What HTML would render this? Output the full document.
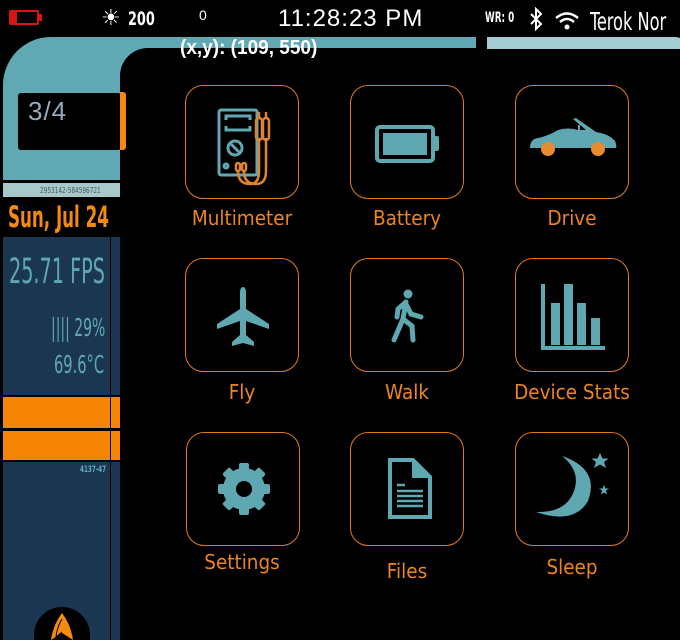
<!DOCTYPE html>
<html style="height:640px;overflow:hidden"><head><meta charset="utf-8"><style>
*{margin:0;padding:0;box-sizing:border-box}
body{width:680px;height:640px;background:#000;position:relative;overflow:hidden;font-family:"Liberation Sans",sans-serif}
.a{position:absolute}
.cond{font-family:"DejaVu Sans Condensed","Liberation Sans",sans-serif;transform-origin:0 0;white-space:nowrap}
.box{position:absolute;width:114px;height:114px;border:1.5px solid #e07a1a;border-radius:18px}
.lbl{position:absolute;width:170px;text-align:center;color:#ec8420;font-size:20px;font-family:"DejaVu Sans","Liberation Sans",sans-serif;transform:scaleX(.92)}
.box svg{position:absolute;left:0;top:0}
</style></head><body>
<!-- status bar -->
<div class="a" style="left:9px;top:10px;width:30px;height:15px;border:2px solid #d81414;border-radius:2px"></div>
<div class="a" style="left:11px;top:12px;width:6px;height:11px;background:#d81414"></div>
<div class="a" style="left:39px;top:14px;width:3px;height:7px;background:#d81414"></div>
<div class="a" style="left:101px;top:5px;color:#fff;font-size:22px">☀</div>
<div class="a cond" style="left:128px;top:8px;color:#fff;font-size:19px;font-weight:bold;transform:scaleX(.75)">200</div>
<div class="a" style="left:199px;top:7px;color:#fff;font-size:14px">0</div>
<div class="a" style="left:278px;top:5px;color:#fff;font-size:24px;letter-spacing:1px">11:28:23 PM</div>
<div class="a cond" style="left:485px;top:10px;color:#fff;font-size:14px;font-weight:bold;transform:scaleX(.7)">WR: 0</div>
<svg class="a" style="left:528px;top:7px" width="56" height="26" viewBox="0 0 56 26"><path d="M3 7 L13 17 L8 22 L8 2 L13 7 L3 17" fill="none" stroke="#fff" stroke-width="2"/><path d="M28 11 Q39 2 50 11" fill="none" stroke="#fff" stroke-width="2.5"/><path d="M32 15 Q39 9 46 15" fill="none" stroke="#fff" stroke-width="2.5"/><circle cx="39" cy="20" r="2.5" fill="#fff"/></svg>
<div class="a cond" style="left:590px;top:7px;color:#fff;font-size:25px;transform:scaleX(.72)">Terok Nor</div>
<!-- frame -->
<div class="a" style="left:3px;top:37px;width:473px;height:143px;background:#60a9b4;border-top-left-radius:48px"></div>
<div class="a" style="left:120px;top:48px;width:400px;height:140px;background:#000;border-top-left-radius:28px"></div>
<div class="a" style="left:487px;top:37px;width:200px;height:12px;background:#a3cdd0;border-top-right-radius:30px"></div>
<div class="a" style="left:18px;top:93px;width:103px;height:57px;background:#000;border-radius:3px"></div>
<div class="a" style="left:120px;top:92px;width:6px;height:58px;background:#f48a10;border-radius:0 3px 3px 0"></div>
<div class="a" style="left:28px;top:96px;font-size:26px;letter-spacing:1px;color:#9ab">3/4</div>
<div class="a" style="left:180px;top:37px;color:#fff;font-size:20px;font-weight:bold;transform:scaleX(.95);transform-origin:0 0">(x,y): (109, 550)</div>
<div class="a" style="left:3px;top:183px;width:117px;height:14px;background:#a8c9c9"></div>
<div class="a cond" style="left:40px;top:186px;color:#456;font-size:8px;transform:scaleX(.8)">2953142-584596721</div>
<div class="a cond" style="left:8px;top:200px;color:#f48a10;font-size:29px;font-weight:bold;transform:scaleX(.64)">Sun, Jul 24</div>
<!-- left panel -->
<div class="a" style="left:3px;top:237px;width:107px;height:158px;background:#1b3651"></div>
<div class="a" style="left:111px;top:237px;width:9px;height:158px;background:#1b3651"></div>
<div class="a" style="left:3px;top:397px;width:107px;height:31px;background:#f68506"></div>
<div class="a" style="left:111px;top:397px;width:9px;height:31px;background:#f68506"></div>
<div class="a" style="left:3px;top:431px;width:107px;height:29px;background:#f68506"></div>
<div class="a" style="left:111px;top:431px;width:9px;height:29px;background:#f68506"></div>
<div class="a" style="left:3px;top:462px;width:107px;height:178px;background:#1b3651"></div>
<div class="a" style="left:111px;top:462px;width:9px;height:178px;background:#1b3651"></div>
<div class="a cond" style="left:9px;top:252px;color:#5fa8b0;font-size:35px;transform:scaleX(.61)">25.71 FPS</div>
<div class="a cond" style="left:51px;top:313px;color:#5fa8b0;font-size:25px;transform:scaleX(.62)">|||| 29%</div>
<div class="a cond" style="left:54px;top:350px;color:#5fa8b0;font-size:25px;transform:scaleX(.65)">69.6°C</div>
<div class="a cond" style="left:80px;top:465px;color:#5fb0c0;font-size:9px;font-weight:bold;transform:scaleX(.7)">4137-47</div>
<div class="a" style="left:34px;top:607px;width:56px;height:56px;border-radius:50%;background:#000"></div>
<svg class="a" style="left:48px;top:613px" width="28" height="27"><path d="M14 0 Q5 12 3 27 L14 20 L25 27 Q23 12 14 0Z" fill="#f48a10"/><path d="M14 6 Q9 14 8 24 L14 19" fill="none" stroke="#000" stroke-width="1"/></svg>
<!-- grid -->
<div class="box" style="left:185px;top:85px"><svg width="114" height="114" viewBox="0 0 114 114"><g fill="none" stroke="#5fa8b2" stroke-width="3"><rect x="33" y="24" width="38" height="65" rx="2"/><path d="M40 34 v-4 h24 v4 M40 40 v4 h24 v-4"/><circle cx="49" cy="62" r="7"/><path d="M45 58 L53 66"/><circle cx="40" cy="80" r="2"/></g><g fill="none" stroke="#e08430" stroke-width="2.5"><rect x="50" y="77" width="4" height="8" rx="2"/><rect x="56" y="77" width="4" height="8" rx="2"/><path d="M52 85 Q52 98 64 98 Q73 98 73 85 V52 M58 85 Q58 98 70 98 Q80 98 80 85 V52"/><rect x="70" y="32" width="6" height="22" rx="3"/><rect x="77" y="32" width="6" height="22" rx="3"/><path d="M73 32 v-6 M80 32 v-6"/></g></svg></div>
<div class="box" style="left:350px;top:85px"><svg width="114" height="114" viewBox="0 0 114 114"><rect x="26" y="41" width="56" height="34" rx="3" fill="none" stroke="#5fa8b2" stroke-width="4"/><rect x="32" y="47" width="44" height="22" fill="#5fa8b2"/><rect x="83" y="50" width="5" height="15" rx="2" fill="#5fa8b2"/></svg></div>
<div class="box" style="left:515px;top:85px"><svg width="114" height="114" viewBox="0 0 114 114"><path d="M14 62 Q14 53 22 52 Q32 50 42 44 Q52 41 62 44 L62 39 L64 39 L64 44 L70 44 L57 33 L60 32 L80 46 Q93 48 99 55 Q101 60 100 62 Z" fill="#5fa8b2"/><circle cx="32" cy="63" r="7" fill="#e88a30"/><circle cx="82" cy="63" r="7" fill="#e88a30"/></svg></div>
<div class="lbl" style="left:157px;top:206px">Multimeter</div>
<div class="lbl" style="left:322px;top:206px">Battery</div>
<div class="lbl" style="left:487px;top:206px">Drive</div>

<div class="box" style="left:185px;top:258px"><svg width="114" height="114" viewBox="0 0 114 114"><path d="M57 28 Q60 28 60 34 V50 L83 65 V70 L60 62 V76 L68 83 V87 L57 84 L46 87 V83 L54 76 V62 L31 70 V65 L54 50 V34 Q54 28 57 28Z" fill="#5fa8b2"/></svg></div>
<div class="box" style="left:350px;top:258px"><svg width="114" height="114" viewBox="0 0 114 114"><circle cx="57" cy="35" r="4.5" fill="#5fa8b2"/><g fill="none" stroke="#5fa8b2" stroke-width="5" stroke-linecap="round"><path d="M55 43 L52 60 L61 67 L62 81"/><path d="M52 60 L43 81"/><path d="M55 43 L47 50 L46 58"/><path d="M56 47 L60 55 L70 58"/></g></svg></div>
<div class="box" style="left:515px;top:258px"><svg width="114" height="114" viewBox="0 0 114 114"><path d="M27 25 V89 H89" fill="none" stroke="#5fa8b2" stroke-width="4"/><rect x="35" y="44" width="9" height="42" fill="#5fa8b2"/><rect x="48" y="25" width="9" height="61" fill="#5fa8b2"/><rect x="61" y="44" width="9" height="42" fill="#5fa8b2"/><rect x="75" y="59" width="9" height="27" fill="#5fa8b2"/></svg></div>
<div class="lbl" style="left:157px;top:380px">Fly</div>
<div class="lbl" style="left:322px;top:380px">Walk</div>
<div class="lbl" style="left:487px;top:380px">Device Stats</div>

<div class="box" style="left:186px;top:432px"><svg width="114" height="114" viewBox="0 0 114 114"><g transform="translate(57 56)"><circle r="21" fill="#5fa8b2"/><g fill="#5fa8b2"><rect x="-5" y="-26" width="10" height="10" rx="2"/><rect x="-5" y="-26" width="10" height="10" rx="2" transform="rotate(45)"/><rect x="-5" y="-26" width="10" height="10" rx="2" transform="rotate(90)"/><rect x="-5" y="-26" width="10" height="10" rx="2" transform="rotate(135)"/><rect x="-5" y="-26" width="10" height="10" rx="2" transform="rotate(180)"/><rect x="-5" y="-26" width="10" height="10" rx="2" transform="rotate(225)"/><rect x="-5" y="-26" width="10" height="10" rx="2" transform="rotate(270)"/><rect x="-5" y="-26" width="10" height="10" rx="2" transform="rotate(315)"/></g><circle r="8" fill="#000"/></g></svg></div>
<div class="box" style="left:350px;top:432px"><svg width="114" height="114" viewBox="0 0 114 114"><path d="M39 27 H62 L79 44 V84 H39Z" fill="none" stroke="#5fa8b2" stroke-width="4"/><path d="M61 28 V45 H78Z" fill="#5fa8b2"/><g stroke="#5fa8b2" stroke-width="2.5"><path d="M46 52 H54 M46 58 H72 M46 63 H72 M46 68 H72 M46 73 H72"/></g></svg></div>
<div class="box" style="left:515px;top:432px"><svg width="114" height="114" viewBox="0 0 114 114"><path d="M46 23 Q84 36 72 68 Q58 92 20 79 Q50 80 58 58 Q65 38 46 23Z" fill="#5fa8b2"/><path d="M84 20 l2.5 5.5 6 0 -4.5 3.5 2 6 -6 -3.5 -6 3.5 2 -6 -4.5 -3.5 6 0z" fill="#5fa8b2"/><path d="M88 52 l1.5 3.5 3.5 0 -3 2 1 4 -3 -2 -3 2 1 -4 -3 -2 3.5 0z" fill="#5fa8b2"/></svg></div>
<div class="lbl" style="left:157px;top:550px">Settings</div>
<div class="lbl" style="left:322px;top:559px">Files</div>
<div class="lbl" style="left:487px;top:555px">Sleep</div>
</body></html>
